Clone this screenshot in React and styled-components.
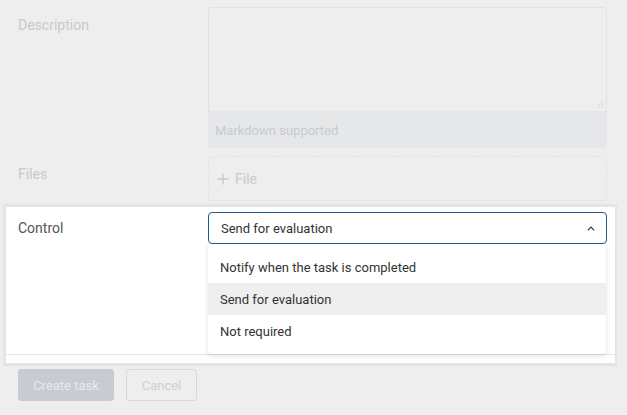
import React from "react";
import styled, { createGlobalStyle } from "styled-components";

const Global = createGlobalStyle`
  html, body { margin: 0; padding: 0; background: #eeeeee; }
  body { font-family: Roboto, "Liberation Sans", Arial, sans-serif; font-size: 14px; }
  * { box-sizing: border-box; }
`;

const Page = styled.div`
  width: 627px;
  height: 415px;
  background: #eeeeee;
  padding: 7px 0 0 0;
  display: flex;
  flex-direction: column;
  overflow: hidden;
`;

const Row = styled.div`
  display: grid;
  grid-template-columns: 190px 399px;
  padding-left: 18px;
  margin-bottom: ${(p) => p.$gap || 0}px;
`;

const Label = styled.div`
  font-size: 14px;
  line-height: 20px;
  color: ${(p) => (p.$active ? "#555555" : "#c9c9c9")};
  padding-top: ${(p) => p.$top || 0}px;
`;

const FieldCol = styled.div`
  display: flex;
  flex-direction: column;
`;

const TextArea = styled.div`
  position: relative;
  height: 105px;
  border: 1px solid #e2e2e2;
  border-bottom-color: #e6e6e6;
  border-radius: 4px 4px 0 0;
  background: #eeeeee;
`;

const Grip = styled.svg`
  position: absolute;
  right: 2px;
  bottom: 2px;
`;

const Hint = styled.div`
  height: 36px;
  background: #e6e7e8;
  border-radius: 0 0 4px 4px;
  padding: 0 7px;
  display: flex;
  align-items: center;
  color: #c6cad3;
  font-size: 13px;
`;

const DropZone = styled.div`
  height: 45px;
  border: 1px dashed #e2e2e2;
  border-radius: 4px;
  display: flex;
  align-items: center;
  gap: 6px;
  padding-left: 8px;
  color: #c9c9c9;
  font-size: 14px;
`;

const Spotlight = styled.div`
  margin: 3px 10px 0 3px;
  border: 3px solid #e4e4e4;
  border-right-width: 2px;
  background: #ffffff;
  display: flex;
  flex-direction: column;
`;

const ControlRow = styled.div`
  display: grid;
  grid-template-columns: 190px 399px;
  padding: 5px 0 0 12px;
  height: 147px;
`;

const SelectWrap = styled.div`
  position: relative;
`;

const Select = styled.div`
  height: 32px;
  border: 1px solid #245b8c;
  border-radius: 4px;
  display: flex;
  align-items: center;
  justify-content: space-between;
  padding: 0 11px 0 12px;
  color: #333333;
  font-size: 13px;
`;

const Menu = styled.div`
  position: absolute;
  left: 0;
  top: 32px;
  width: 398px;
  background: #ffffff;
  border-radius: 0 0 4px 4px;
  box-shadow: 0 2px 5px rgba(0, 0, 0, 0.12), 0 0 1px rgba(0, 0, 0, 0.06);
  padding: 7px 0;
`;

const Item = styled.div`
  height: 32px;
  display: flex;
  align-items: center;
  padding-left: 12px;
  color: #333333;
  font-size: 13px;
  background: ${(p) => (p.$active ? "#efefef" : "#ffffff")};
`;

const Divider = styled.div`
  height: 1px;
  background: #e6e6e6;
`;

const Tail = styled.div`
  height: 8px;
`;

const Actions = styled.div`
  display: flex;
  gap: 12px;
  padding: 3px 0 0 18px;
`;

const Button = styled.div`
  height: 32px;
  border-radius: 3px;
  display: flex;
  align-items: center;
  justify-content: center;
  font-size: 13px;
  width: ${(p) => p.$w}px;
  background: ${(p) => (p.$primary ? "#c6cbd4" : "transparent")};
  color: ${(p) => (p.$primary ? "#e6e9ee" : "#ccd1d8")};
  border: 1px solid ${(p) => (p.$primary ? "#c6cbd4" : "#d3d9e1")};
`;

export default function App() {
  return (
    <>
      <Global />
      <Page>
        <Row $gap={8}>
          <Label $top={8}>Description</Label>
          <FieldCol>
            <TextArea>
              <Grip width="10" height="10" viewBox="0 0 10 10">
                <path d="M9 2 L2 9 M9 5 L5 9 M9 8 L8 9" stroke="#c4c4c4" strokeWidth="1" strokeDasharray="1 1" fill="none" />
              </Grip>
            </TextArea>
            <Hint>Markdown supported</Hint>
          </FieldCol>
        </Row>
        <Row>
          <Label $top={8}>Files</Label>
          <DropZone>
            <svg width="12" height="12" viewBox="0 0 12 12">
              <path d="M6 0.5 V11.5 M0.5 6 H11.5" stroke="#c9c9c9" strokeWidth="1.4" fill="none" />
            </svg>
            File
          </DropZone>
        </Row>
        <Spotlight>
          <ControlRow>
            <Label $active $top={6}>Control</Label>
            <SelectWrap>
              <Select>
                Send for evaluation
                <svg width="8" height="5" viewBox="0 0 8 5">
                  <path d="M0.8 4.3 L4 1.1 L7.2 4.3" stroke="#333" strokeWidth="1.2" fill="none" />
                </svg>
              </Select>
              <Menu>
                <Item>Notify when the task is completed</Item>
                <Item $active>Send for evaluation</Item>
                <Item>Not required</Item>
              </Menu>
            </SelectWrap>
          </ControlRow>
          <Divider />
          <Tail />
        </Spotlight>
        <Actions>
          <Button $primary $w={96}>Create task</Button>
          <Button $w={71}>Cancel</Button>
        </Actions>
      </Page>
    </>
  );
}
